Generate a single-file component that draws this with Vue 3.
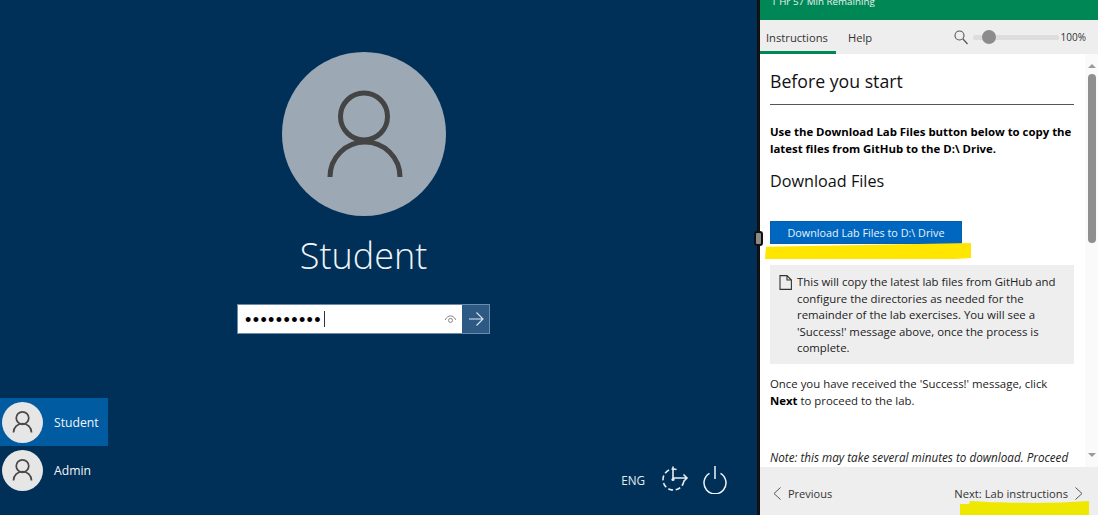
<script setup>
const users = [
  { name: 'Student', active: true },
  { name: 'Admin', active: false },
]
const noteLines = [
  'This will copy the latest lab files from GitHub and',
  'configure the directories as needed for the',
  'remainder of the lab exercises. You will see a',
  "'Success!' message above, once the process is",
  'complete.',
]
</script>

<template>
  <div class="screen">
    <section class="desktop">
      <div class="login">
        <svg class="avatar-big" viewBox="0 0 164 164" aria-hidden="true">
          <circle cx="82" cy="82" r="82" fill="#9ca9b5" />
          <circle cx="82" cy="64.5" r="23.5" fill="none" stroke="#444" stroke-width="5" />
          <path d="M48 125A35 35 0 0 1 118 125" fill="none" stroke="#444" stroke-width="5" />
        </svg>
        <div class="login-name">Student</div>
        <div class="password">
          <div class="password-field">
            <span class="dots">••••••••••</span><span class="caret"></span>
            <svg class="eye" viewBox="0 0 14 10" aria-hidden="true">
              <path d="M1 5.5C3 2 5 1 7 1s4 1 6 4.5" fill="none" stroke="#777" stroke-width="1" />
              <circle cx="7" cy="6" r="2.2" fill="none" stroke="#777" stroke-width="1" />
            </svg>
          </div>
          <div class="password-go">
            <svg viewBox="0 0 16 16" width="16" height="16" aria-hidden="true">
              <path d="M1 8H15M8.5 1.5L15 8L8.5 14.5" fill="none" stroke="#dfe7ee" stroke-width="1.1" />
            </svg>
          </div>
        </div>
      </div>

      <div class="desktop-bottom">
        <ul class="users">
          <li v-for="u in users" :key="u.name" class="user" :class="{ active: u.active }">
            <svg class="avatar-small" viewBox="0 0 164 164" aria-hidden="true">
              <circle cx="82" cy="82" r="82" fill="#e6e6e6" />
              <circle cx="82" cy="64" r="25" fill="none" stroke="#4a4a4a" stroke-width="7" />
              <path d="M46 122A36 36 0 0 1 118 122" fill="none" stroke="#4a4a4a" stroke-width="7" />
            </svg>
            <span>{{ u.name }}</span>
          </li>
        </ul>
        <div class="tray">
          <span class="lang">ENG</span>
          <svg class="tray-access" viewBox="0 0 28 28" aria-hidden="true">
            <path d="M15.5 3.5A10.5 10.5 0 1 0 22.9 15" fill="none" stroke="#e8edf2" stroke-width="1.6" stroke-dasharray="5 2.6" />
            <path d="M12 .5V14M12 12H26M22.5 8.5L26 12L22.5 15.5" fill="none" stroke="#e8edf2" stroke-width="1.6" />
            <circle cx="12" cy="13.5" r="1.6" fill="#e8edf2" />
          </svg>
          <svg class="tray-power" viewBox="0 0 26 28" aria-hidden="true">
            <path d="M7.5 7.3A11 11 0 1 0 18.5 7.3" fill="none" stroke="#f0f3f6" stroke-width="1.5" />
            <path d="M13 0V13" fill="none" stroke="#f0f3f6" stroke-width="1.5" />
          </svg>
        </div>
      </div>
    </section>

    <div class="divider"><span class="divider-handle"></span></div>

    <aside class="panel">
      <header class="timer"><span>1 Hr 57 Min Remaining</span></header>

      <nav class="tabs">
        <span class="tab current">Instructions</span>
        <span class="tab">Help</span>
        <div class="zoom">
          <svg viewBox="0 0 14 15" width="14" height="15" aria-hidden="true">
            <circle cx="5.5" cy="5.5" r="4.5" fill="none" stroke="#555" stroke-width="1.1" />
            <path d="M9 9L13.5 14" stroke="#555" stroke-width="1.2" />
          </svg>
          <div class="slider"><span class="slider-knob"></span></div>
          <span class="zoom-value">100%</span>
        </div>
      </nav>

      <div class="content">
        <article class="doc">
          <h1>Before you start</h1>
          <p class="lead">Use the Download Lab Files button below to copy the latest files from GitHub to the D:\ Drive.</p>
          <h2>Download Files</h2>
          <div class="download-wrap">
            <button class="download" type="button">Download Lab Files to D:\ Drive</button>
            <svg class="mark mark-download" viewBox="0 0 207 18" preserveAspectRatio="none" aria-hidden="true">
              <path d="M1 4L206 0V16L190 17H0Z" fill="#ffe600" />
            </svg>
          </div>
          <div class="note">
            <svg class="note-icon" viewBox="0 0 13 15" width="13" height="15" aria-hidden="true">
              <path d="M1 .6H8L12.4 5V14.4H1ZM8 .6V5H12.4" fill="none" stroke="#333" stroke-width="1.1" />
            </svg>
            <p><span v-for="l in noteLines" :key="l" class="note-line">{{ l }}</span></p>
          </div>
          <p class="after">Once you have received the 'Success!' message, click<br /><b>Next</b> to proceed to the lab.</p>
          <p class="caution"><i>Note: this may take several minutes to download. Proceed</i></p>
        </article>
        <div class="scrollbar">
          <span class="arrow up"></span>
          <span class="thumb"></span>
          <span class="arrow down"></span>
        </div>
      </div>

      <footer class="pager">
        <span class="pager-link pager-prev">
          <svg viewBox="0 0 8 13" width="8" height="13" aria-hidden="true"><path d="M7.5 .5L1 6.5L7.5 12.5" fill="none" stroke="#555" stroke-width="1" /></svg>
          Previous
        </span>
        <span class="pager-link">
          Next: Lab instructions
          <svg viewBox="0 0 8 13" width="8" height="13" aria-hidden="true"><path d="M.5 .5L7 6.5L.5 12.5" fill="none" stroke="#555" stroke-width="1" /></svg>
        </span>
        <svg class="mark mark-next" viewBox="0 0 129 15" preserveAspectRatio="none" aria-hidden="true">
          <path d="M0 4H9L10 1C40 3 90 4 129 1V15H0Z" fill="#eee800" />
        </svg>
      </footer>
    </aside>
  </div>
</template>

<style>
html, body { background: #fff; }
</style>

<style scoped>
.screen {
  display: flex;
  width: 1098px;
  height: 515px;
  overflow: hidden;
  font-family: "Open Sans", "Noto Sans", sans-serif;
  color: #1a1a1a;
}
.desktop {
  width: 757px;
  flex: none;
  background: #003058;
  display: flex;
  flex-direction: column;
  justify-content: space-between;
  color: #fff;
}
.login {
  width: 727px;
  padding-top: 52px;
  display: flex;
  flex-direction: column;
  align-items: center;
}
.avatar-big { width: 164px; height: 164px; display: block; }
.login-name {
  margin-top: 15px;
  font-size: 36px;
  line-height: 50px;
  font-weight: 300;
  color: #f1f4f7;
}
.password {
  display: flex;
  margin-top: 23px;
  width: 253px;
  height: 30px;
  box-sizing: border-box;
  border: 1.5px solid #6d8ba8;
}
.password-field {
  flex: 1;
  background: #fff;
  display: flex;
  align-items: center;
  padding-left: 7px;
  color: #000;
}
.dots { font-family: "Liberation Sans", sans-serif; font-size: 18px; letter-spacing: 1.4px; line-height: 1; padding-top: 1px; }
.caret { width: 1px; height: 16px; background: #333; margin-left: 2px; }
.eye { width: 13px; height: 9px; margin-left: auto; margin-right: 5px; }
.password-go {
  width: 27px;
  background: #2c5a85;
  display: flex;
  align-items: center;
  justify-content: center;
}
.desktop-bottom { display: flex; justify-content: space-between; align-items: flex-end; padding-bottom: 21px; }
.users { list-style: none; margin: 0; padding: 0; }
.user {
  width: 108px;
  height: 48px;
  display: flex;
  align-items: center;
  padding-left: 2px;
  box-sizing: border-box;
  gap: 11px;
  font-size: 12.2px;
  color: #f2f5f8;
}
.user.active { background: #005ba1; }
.avatar-small { width: 41px; height: 41px; flex: none; }
.tray { display: flex; align-items: center; height: 28px; padding-right: 29px; }
.lang { font-size: 11.7px; color: #e6ebf0; margin-right: 16px; }
.tray-access { width: 28px; height: 28px; margin-right: 13px; }
.tray-power { width: 26px; height: 28px; }

.divider { width: 3px; flex: none; background: #111; position: relative; }
.divider-handle {
  position: absolute;
  left: -3px;
  top: 231px;
  width: 9px;
  height: 15px;
  box-sizing: border-box;
  border: 2px solid #111;
  border-radius: 3px;
  background: #8a8a8a;
}

.panel { flex: 1; min-width: 0; display: flex; flex-direction: column; background: #fff; }
.timer {
  height: 20px;
  flex: none;
  background: #008756;
  color: #e6f4ee;
  font-size: 9.8px;
  line-height: 3px;
  padding-left: 11px;
  overflow: hidden;
}
.tabs {
  height: 34px;
  flex: none;
  background: #eee;
  display: flex;
  font-size: 11.2px;
  color: #333;
}
.tab { display: flex; align-items: center; padding: 0 6px; box-sizing: border-box; margin-right: 8px; }
.tab.current { width: 76px; border-bottom: 3px solid #008756; padding-top: 3px; margin-right: 6px; }
.tab:not(.current) { padding-left: 6px; }
.zoom { margin-left: auto; display: flex; align-items: center; padding-right: 12px; }
.slider {
  width: 86px;
  height: 5px;
  margin-left: 5px;
  background: #ddd;
  border-radius: 3px;
  display: flex;
  align-items: center;
  padding-left: 9px;
  box-sizing: border-box;
}
.slider-knob { width: 14px; height: 14px; border-radius: 50%; background: #8c8c8c; flex: none; }
.zoom-value { font-size: 10px; margin-left: 2px; }

.content { flex: 1; min-height: 0; display: flex; overflow: hidden; }
.doc { flex: 1; min-width: 0; padding: 14px 11px 0 10px; overflow: hidden; font-size: 11.4px; line-height: 16.5px; }
h1 {
  margin: 0;
  font-size: 17.7px;
  line-height: 27px;
  font-weight: 400;
  padding-bottom: 9px;
  border-bottom: 1px solid #555;
  color: #111;
}
.lead { margin: 19px 0 0; font-weight: 700; font-size: 11.4px; color: #000; }
h2 { margin: 12px 0 0; font-size: 16.2px; line-height: 24px; font-weight: 400; color: #111; }
.download-wrap { position: relative; margin-top: 28px; height: 23px; }
.download {
  display: block;
  width: 192px;
  height: 23px;
  padding: 1px 0 0;
  border: 1px solid #0b5ea8;
  background: #0067c0;
  color: #e9f2fa;
  font: inherit;
  font-size: 10.8px;
}
.mark { position: absolute; display: block; }
.mark-download { left: -5px; top: 22px; width: 207px; height: 17px; }
.note {
  margin-top: 21px;
  height: 99px;
  box-sizing: border-box;
  background: #eee;
  display: flex;
  padding: 9px 8px 0 9px;
  gap: 5px;
}
.note-icon { flex: none; margin-top: 1px; }
.note p { margin: 0; color: #222; }
.note-line { display: block; white-space: nowrap; }
.after { margin: 12px 0 0; color: #222; }
.after b { color: #000; }
.caution { margin: 40px 0 0; white-space: nowrap; color: #222; font-size: 11.7px; }
.scrollbar {
  width: 13px;
  flex: none;
  background: #fafafa;
  display: flex;
  flex-direction: column;
  align-items: center;
  padding-top: 10px;
  box-sizing: border-box;
  position: relative;
}
.arrow { width: 0; height: 0; border-left: 4px solid transparent; border-right: 4px solid transparent; }
.arrow.up { border-bottom: 4px solid #9a9a9a; }
.arrow.down { border-top: 4px solid #9a9a9a; margin-top: 210px; }
.thumb { width: 8px; height: 169px; margin-top: 6px; background: #8f8f8f; border-radius: 4px; }
.pager {
  height: 48px;
  flex: none;
  background: #eee;
  position: relative;
  display: flex;
  justify-content: space-between;
  align-items: center;
  padding: 4px 15px 0 13px;
  box-sizing: border-box;
  font-size: 11.2px;
  color: #333;
}
.pager-prev { font-size: 11px; }
.pager-link { display: flex; align-items: center; gap: 7px; }
.mark-next { right: 9px; bottom: 0; width: 129px; height: 15px; }
</style>
